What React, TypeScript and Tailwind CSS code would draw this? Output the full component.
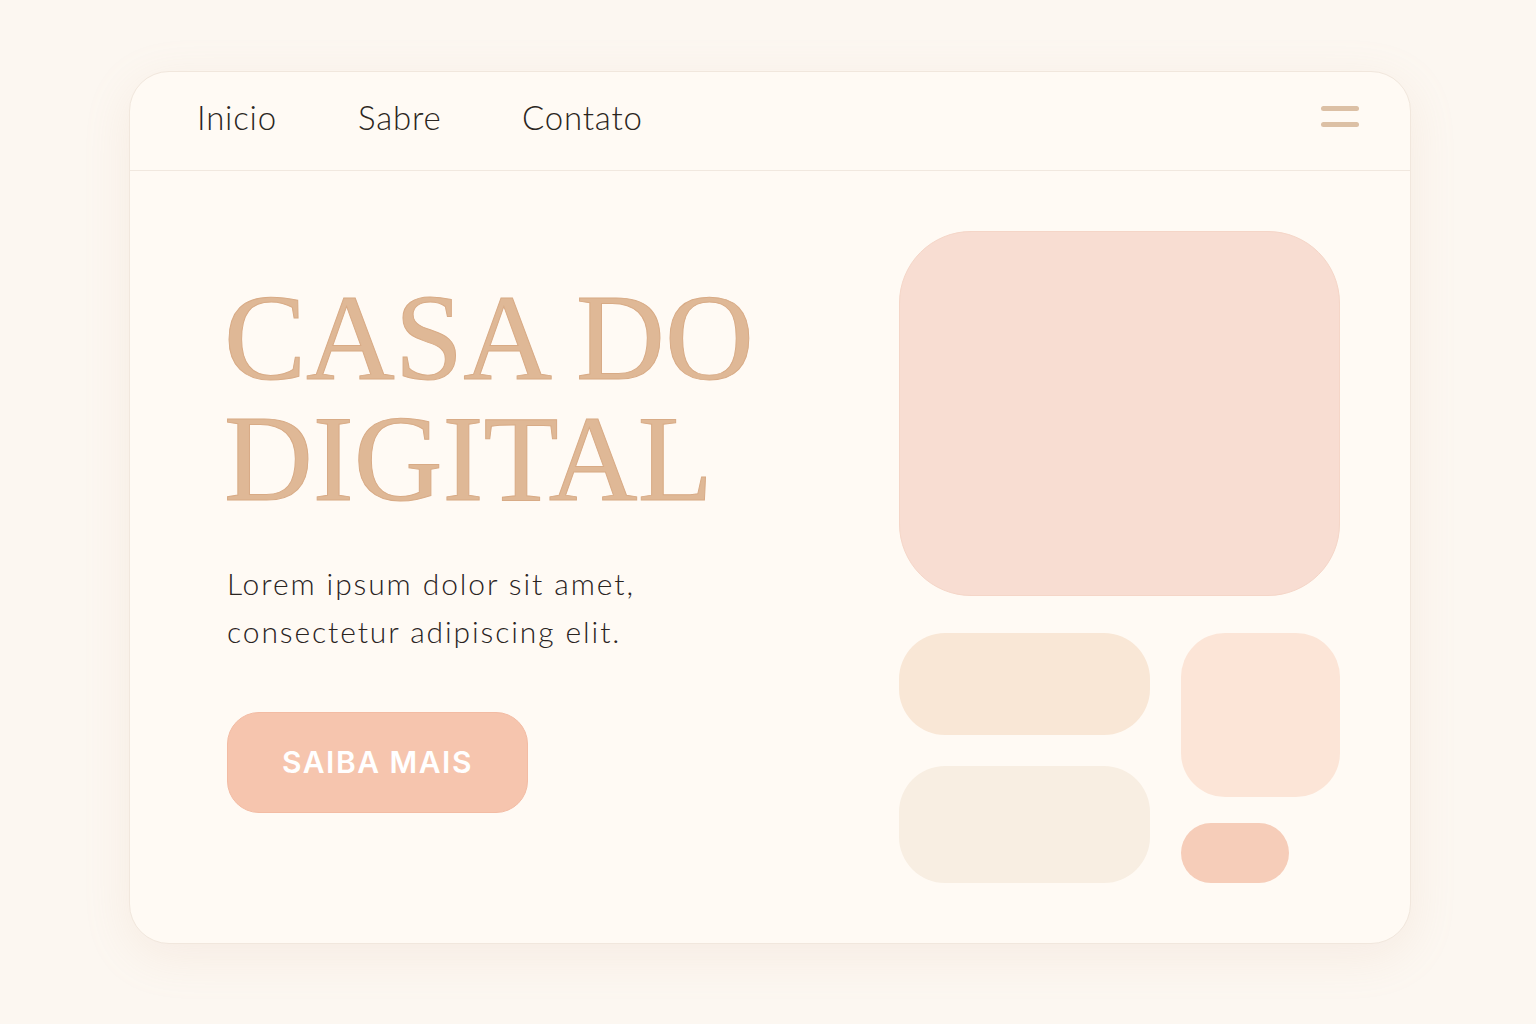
import React from "react";

const NAV = [
  { label: "Inicio", w: "w-[161px]" },
  { label: "Sabre", w: "w-[164px]" },
  { label: "Contato", w: "w-auto" },
];

export default function App() {
  return (
    <div className="min-h-screen w-full bg-[#fcf7f1] pt-[71px] pb-[80px]">
      <div className="ml-[129px] w-[1282px] rounded-[40px] border border-[#f1e7dd] bg-[#fffaf4] shadow-[0_12px_48px_rgba(210,170,140,0.14)]">
        {/* Header */}
        <header className="flex h-[99px] items-center justify-between border-b border-[#f1e8df] pl-[67px] pr-[51px]">
          <nav className="flex items-center pb-[8px] font-['Lato',sans-serif] text-[33px] font-light tracking-[0.8px] text-[#2b2621]">
            {NAV.map((item) => (
              <a key={item.label} href="#" className={`leading-none ${item.w}`}>
                {item.label}
              </a>
            ))}
          </nav>
          <button className="flex flex-col gap-[11px] pb-[10px]" aria-label="menu">
            <span className="block h-[5px] w-[38px] rounded-full bg-[#dcc0a5]" />
            <span className="block h-[5px] w-[38px] rounded-full bg-[#dcc0a5]" />
          </button>
        </header>

        {/* Body */}
        <div className="flex justify-between pb-[60px] pl-[97px] pr-[70px] pt-[60px]">
          <div className="mt-[46px] flex flex-col items-start">
            <h1 className="-ml-[3px] font-['Liberation_Serif',serif] text-[123px] font-normal leading-[121px] text-[#dfb896] [-webkit-text-stroke:1px_#d8ab86]">
              <span className="block">CASA DO</span>
              <span className="block">DIGITAL</span>
            </h1>
            <p className="mt-[40px] font-['Lato',sans-serif] text-[30px] font-light leading-[48px] tracking-[1.9px] text-[#2a241f]">
              Lorem ipsum dolor sit amet,
              <br />
              consectetur adipiscing elit.
            </p>
            <button className="mt-[57px] flex h-[101px] w-[301px] items-center justify-center rounded-[32px] border border-[#f3bca4] bg-[#f6c5ae] font-['Inter',sans-serif] text-[30px] font-semibold tracking-[0.05em] text-white">
              SAIBA MAIS
            </button>
          </div>

          <div className="flex w-[441px] flex-col gap-[37px]">
            <div className="h-[365px] rounded-[72px] border border-[#f5d6c8] bg-[#f8ddd2]" />
            <div className="flex gap-[31px]">
              <div className="flex w-[251px] flex-col gap-[31px]">
                <div className="h-[102px] rounded-[46px] bg-[#f9e7d6]" />
                <div className="h-[117px] rounded-[46px] bg-[#f8eee2]" />
              </div>
              <div className="flex flex-1 flex-col gap-[26px]">
                <div className="h-[164px] rounded-[44px] bg-[#fce5d7]" />
                <div className="h-[60px] w-[108px] rounded-[30px] bg-[#f6cdb9]" />
              </div>
            </div>
          </div>
        </div>
      </div>
    </div>
  );
}
